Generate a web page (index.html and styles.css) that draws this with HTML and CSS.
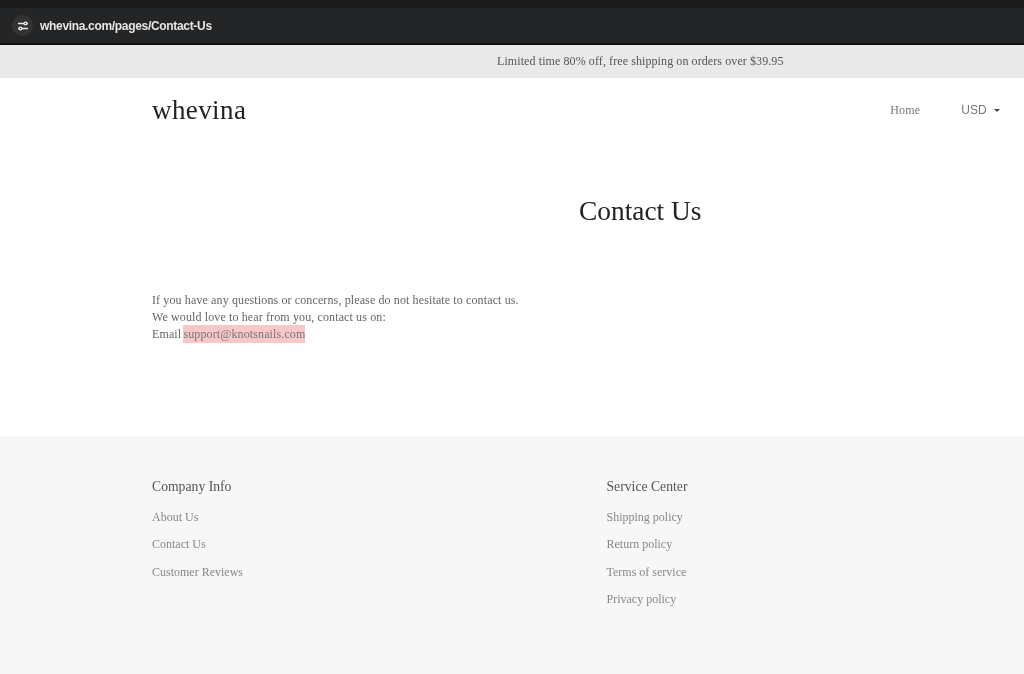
FILE: index.html
```html
<!DOCTYPE html>
<html lang="en">
  <head>
    <meta charset="UTF-8" />
    <title>Contact Us - whevina</title>
    <link rel="stylesheet" href="styles.css">
  </head>
  <body>
    <div class="browser-bar">
      <div class="url-pill">
        <span class="tune-btn">
          <svg width="14" height="14" viewBox="0 0 14 14" fill="none" stroke="#e8e8e8" stroke-width="1.4">
            <path d="M2 4.5h6M11 4.5h1M2 9.5h1M6 9.5h6" />
            <circle cx="9.5" cy="4.5" r="1.4" />
            <circle cx="4.5" cy="9.5" r="1.4" />
          </svg>
        </span>
        <span class="url-text">whevina.com/pages/Contact-Us</span>
      </div>
    </div>

    <div class="announce">Limited time 80% off, free shipping on orders over $39.95</div>

    <header class="site-header">
      <a class="logo">whevina</a>
      <nav class="nav">
        <a class="nav-link">Home</a>
        <span class="currency">USD <i class="caret"></i></span>
      </nav>
    </header>

    <main class="content">
      <h1>Contact Us</h1>
      <p>
        If you have any questions or concerns, please do not hesitate to contact us.<br />
        We would love to hear from you, contact us on:<br />
        Email <mark>support@knotsnails.com</mark>
      </p>
    </main>

    <footer class="footer">
      <div class="footer-col">
        <h4>Company Info</h4>
        <a>About Us</a>
        <a>Contact Us</a>
        <a>Customer Reviews</a>
      </div>
      <div class="footer-col">
        <h4>Service Center</h4>
        <a>Shipping policy</a>
        <a>Return policy</a>
        <a>Terms of service</a>
        <a>Privacy policy</a>
      </div>
    </footer>
  </body>
</html>
```

FILE: styles.css
```css
html,
body {
  margin: 0;
  padding: 0;
}

body {
  font-family: "Liberation Serif", serif;
  background-color: #fff;
  color: #555;
  height: 674px;
  overflow: hidden;
  filter: blur(0.4px);
}

.browser-bar {
  height: 45px;
  box-sizing: border-box;
  background-color: #242526;
  border-top: 8px solid #1a1a1a;
  border-bottom: 2px solid #111;
  display: flex;
  align-items: center;
  padding-left: 12px;
}

.url-pill {
  display: flex;
  align-items: center;
  gap: 7px;
}

.tune-btn {
  width: 21px;
  height: 21px;
  border-radius: 50%;
  background-color: #333;
  display: flex;
  align-items: center;
  justify-content: center;
}

.url-text {
  font-family: "Liberation Sans", sans-serif;
  font-size: 12px;
  font-weight: bold;
  letter-spacing: -0.32px;
  color: #e6e6e6;
}

.announce {
  height: 33px;
  line-height: 33px;
  background-color: #e9e9e9;
  padding-left: 497px;
  font-size: 12px;
  letter-spacing: 0.09px;
  color: #555;
}

.site-header {
  display: flex;
  justify-content: space-between;
  align-items: center;
  height: 64px;
  padding: 0 24px 0 152px;
}

.logo {
  font-size: 27px;
  color: #222;
  letter-spacing: 0.4px;
}

.nav {
  display: flex;
  align-items: center;
  gap: 41px;
}

.nav-link {
  font-size: 12px;
  letter-spacing: 0.2px;
  color: #777;
}

.currency {
  font-family: "Liberation Sans", sans-serif;
  font-size: 12px;
  color: #777;
}

.caret {
  display: inline-block;
  margin-left: 4px;
  vertical-align: middle;
  border-left: 3px solid transparent;
  border-right: 3px solid transparent;
  border-top: 3px solid #444;
}

.content {
  height: 294px;
  box-sizing: border-box;
  padding: 52px 0 0 152px;
}

.content h1 {
  margin: 0 0 64px;
  padding-left: 427px;
  font-size: 27.4px;
  font-weight: normal;
  line-height: 34px;
  color: #222;
}

.content p {
  margin: 0;
  font-size: 12px;
  letter-spacing: 0.12px;
  line-height: 17px;
  color: #666;
}

.content mark {
  background-color: #f8c8c8;
  color: #777;
  padding: 2px 0;
  margin-left: -1px;
}

.footer {
  height: 238px;
  box-sizing: border-box;
  background-color: #f7f7f7;
  padding: 42px 0 0 152px;
  display: flex;
}

.footer-col {
  flex: none;
  width: 454.5px;
  display: flex;
  flex-direction: column;
  align-items: flex-start;
}

.footer-col h4 {
  margin: 0 0 14px;
  font-size: 13.7px;
  font-weight: normal;
  line-height: 18px;
  color: #555;
}

.footer-col a {
  font-size: 12px;
  line-height: 14px;
  margin-bottom: 13.3px;
  color: #888;
}
```
